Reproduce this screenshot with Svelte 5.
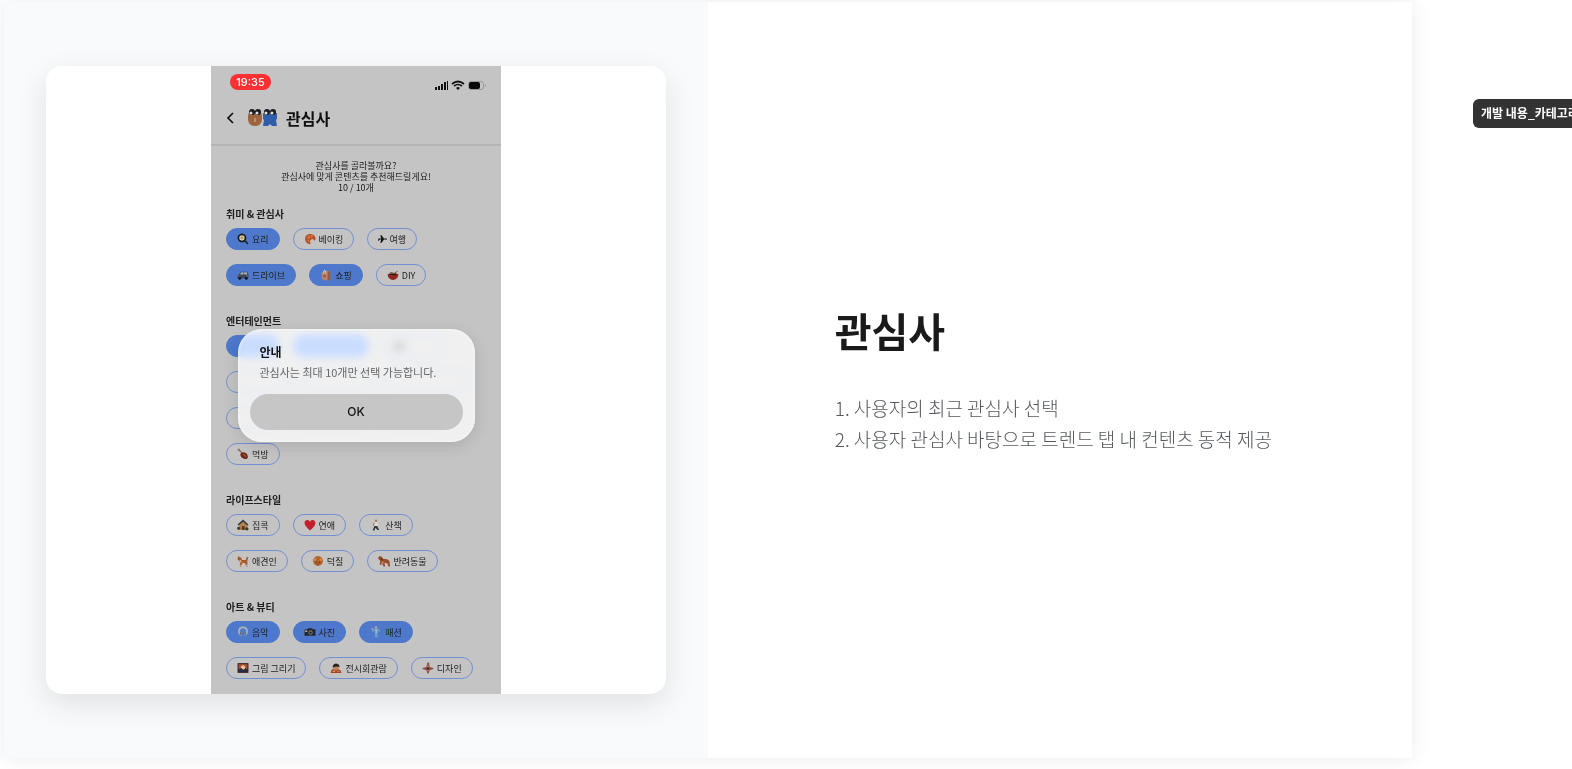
<script>
    // each icon is a list of [path, fill] on a 22x22 grid
    const icons = {
        cook: [
            ['M9 1a8 8 0 1 0 .1 0z', '#161718'],
            ['M9 4a5 5 0 1 0 .1 0z', '#d5d2c8'],
            ['M9 6a3 3 0 1 0 .1 0z', '#c2a052'],
            ['M13 15l2-2 6 6-2 2z', '#222426']
        ],
        bread: [
            ['M2 11C2 3 10 0 17 3c5 3 5 8 3 11l-4-3-3 1-2 3 1 5c-5 1-10-3-10-9z', '#b8502a'],
            ['M5 9l5-5 1 6zM12 3l5 2-3 4zM5 12l4 1 1 5z', '#dc8046']
        ],
        plane: [['M0 10h7L5 3h3l5 7h6q3 1 0 2h-6l-5 7H5l2-7H4l-2 3H0l1-4z', '#141414']],
        car: [
            ['M3 11l4-6h12l2 6v6H1v-5z', '#39475a'],
            ['M8 6h4v4H5zM13 6h5l1 4h-6z', '#a3adb6'],
            ['M5 14a3 3 0 1 0 .1 0zM17 14a3 3 0 1 0 .1 0z', '#17191d'],
            ['M2 12h3v2H2zM17 12h3v2h-3z', '#b35148']
        ],
        bag: [
            ['M3 6l13-3 3 3v14l-5 1-11-2z', '#b48768'],
            ['M16 3l3 3v14l-5 1V6z', '#8f5c48'],
            ['M6 9V4q3-4 5 0v5h-1V5q-2-2-3 0v4z', '#e0d3c8'],
            ['M6 11h5v4H6z', '#b54c40']
        ],
        bowl: [
            ['M1 10q10-5 20 0-1 9-10 10Q2 19 1 10z', '#91291f'],
            ['M3 10q8-4 16 0-8 3-16 0z', '#2c1914'],
            ['M12 8l7-5 1 1-6 5zM5 7q3-3 7 0v2H5z', '#806047']
        ],
        meat: [
            ['M9 8q9-1 11 7 0 6-6 5-8-2-8-9z', '#6c2b1e'],
            ['M10 10q7 1 8 7-6-1-8-7z', '#a54a2b'],
            ['M8 9L3 5 1 5l1-4 3 1 1 2 4 4z', '#8f6f5c']
        ],
        house: [
            ['M11 2l10 9-2 2v7H4v-8L2 11z', '#b38450'],
            ['M1 10L11 1l10 9-2 2-8-7-8 7z', '#373b3f'],
            ['M9 13h5v7H9z', '#5a3526'],
            ['M3 14a3 3 0 1 0 .1 0zM18 15a3 3 0 1 0 .1 0z', '#314227']
        ],
        heart: [['M11 21C5 16 1 12 1 7c0-6 8-7 10-2 2-5 10-4 10 2 0 5-4 9-10 14z', '#c3222c']],
        walk: [
            ['M11 1a2 2 0 1 0 .1 0z', '#a96d4e'],
            ['M9 6h4l2 6-2 1-1 1H8z', '#e0dcd4'],
            ['M8 13h5l4 7h-3l-4-4-2 5H5z', '#2b3440'],
            ['M7 7l-2 6h1l3-5z', '#a96d4e']
        ],
        dog: [
            ['M2 2l3 2 3 1 1 4h7l2-6 3 1-2 6v5l1 6h-3l-2-6-5-1-2 7H5l1-7-2-4-3-1z', '#a9582b'],
            ['M5 9l3 1v4l-2-1zM7 18h3v2H6zM17 18h3v2h-3z', '#e0c09a'],
            ['M3 5h1v1H3z', '#1c1714']
        ],
        face: [
            ['M11 2a9 9 0 1 0 .1 0z', '#b66330'],
            ['M5 5l3 4-4 2zM17 5l-3 4 4 2z', '#df9a5c'],
            ['M7 12h2v2H7zM13 12h2v2h-2zM9 16h4v1H9z', '#53270f']
        ],
        puppy: [
            ['M2 2l5 1 2 4 8 1 4 3 1 10h-3l-2-6-5-1 1 7h-3l-3-7-1 4H3l1-8-4-3z', '#9b4c29'],
            ['M7 5l2 4-1 2-3-3z', '#573020'],
            ['M7 11l3 2v3l-3-2z', '#cf9c77']
        ],
        music: [
            ['M11 1C4 1 1 6 2 13l4 5 3-1-1-7-3 1c0-9 12-9 12 0l-3-1-1 7 3 1 4-5C21 6 18 1 11 1z', '#a8b0b5'],
            ['M5 11l3-1 1 6-3 1zM17 11l-3-1-1 6 3 1z', '#60717d']
        ],
        camera: [
            ['M1 7l5-1 2-2h7l1 2h5v12H1z', '#23272b'],
            ['M12 8a4 4 0 1 0 .1 0z', '#6f797e'],
            ['M12 10a2 2 0 1 0 .1 0z', '#17191b'],
            ['M2 8h4v3H2z', '#b0a685']
        ],
        fashion: [
            ['M8 4h7l4 5-2 2-3-3v13H9V8l-4 3-2-2z', '#6d9fc4'],
            ['M3 3l3 3-1 2-3-3zM11 0a2 2 0 1 0 .1 0z', '#b7a595'],
            ['M10 6h3v7h-3z', '#9cbccb']
        ],
        paint: [
            ['M1 2h20v18H1z', '#402428'],
            ['M3 4h16v9H3z', '#ad4e32'],
            ['M11 6a4 4 0 1 0 .1 0z', '#e5c9a4'],
            ['M3 14l5-3 4 4 4-4 3 4v3H3z', '#252e44']
        ],
        museum: [
            ['M1 20l2-6 5-2 7 1 5 3 1 4z', '#a74428'],
            ['M11 6a5 5 0 1 0 .1 0z', '#c08058'],
            ['M5 8q2-7 8-5 4 1 5 6-6-2-13 1z', '#262222'],
            ['M5 16h4v2H5zM13 17h5v1h-5z', '#dfbd75']
        ],
        design: [
            ['M10 1h3l1 8 7 2v2l-7 2-2 6h-2l-2-6-7-2v-2l7-2z', '#924c45'],
            ['M11 4l2 8-2 7-2-7z', '#bd837b'],
            ['M9 10h4v4H9z', '#2b2826']
        ]
    };

    const sections = [
        {
            title: '취미 & 관심사',
            rows: [
                [{ icon: 'cook', label: '요리', on: true }, { icon: 'bread', label: '베이킹' }, { icon: 'plane', label: '여행', tight: true }],
                [{ icon: 'car', label: '드라이브', on: true }, { icon: 'bag', label: '쇼핑', on: true }, { icon: 'bowl', label: 'DIY' }]
            ]
        },
        {
            title: '엔터테인먼트',
            rows: [
                [{ width: 54, on: true }, { width: 76, on: true }, { icon: 'camera', width: 62 }],
                [{ width: 62 }, { width: 70 }, { width: 87 }],
                [{ width: 54 }, { width: 76 }, { width: 62 }],
                [{ icon: 'meat', label: '먹방' }]
            ]
        },
        {
            title: '라이프스타일',
            rows: [
                [{ icon: 'house', label: '집콕' }, { icon: 'heart', label: '연애' }, { icon: 'walk', label: '산책' }],
                [{ icon: 'dog', label: '애견인' }, { icon: 'face', label: '덕질' }, { icon: 'puppy', label: '반려동물' }]
            ]
        },
        {
            title: '아트 & 뷰티',
            rows: [
                [{ icon: 'music', label: '음악', on: true }, { icon: 'camera', label: '사진', on: true }, { icon: 'fashion', label: '패션', on: true }],
                [{ icon: 'paint', label: '그림 그리기' }, { icon: 'museum', label: '전시회관람' }, { icon: 'design', label: '디자인' }]
            ]
        }
    ];

    const points = ['사용자의 최근 관심사 선택', '사용자 관심사 바탕으로 트렌드 탭 내 컨텐츠 동적 제공'];
</script>

<div class="page">
    <main class="slide">
        <div class="preview">
            <div class="card">
                <div class="phone">
                    <div class="status">
                        <span class="time">19:35</span>
                        <svg width="52" height="12" viewBox="0 0 52 12">
                            <path d="M1 8h2v3H1zM4 7h2v4H4zM7 5h2v6H7zM10 3h2v8h-2zM13 2h1v9h-1z" fill="#111" />
                            <path d="M18 5q6-5 12 0M20 7q4-3 8 0" fill="none" stroke="#111" stroke-width="1.7" />
                            <path d="M22 9q2-2 4 0l-2 2z" fill="#111" />
                            <rect x="34.5" y="2.5" width="15" height="8" rx="2.5" fill="none" stroke="#999" />
                            <rect x="35" y="3" width="11" height="7" rx="2" fill="#080808" />
                            <path d="M51 5q2 1 0 3z" fill="#999" />
                        </svg>
                    </div>

                    <header class="bar">
                        <button class="back" aria-label="뒤로">
                            <svg width="8" height="14" viewBox="0 0 8 14">
                                <path d="M7 2L2 7l5 5" fill="none" stroke="#111" stroke-width="1.7" />
                            </svg>
                        </button>
                        <svg width="31" height="20" viewBox="0 0 31 20">
                            <path d="M1 8q0-5 7-5t7 5v4q-1 6-7 6t-7-6z" fill="#9c653f" />
                            <path d="M16 5l6 1 8-1v6l-1 1 1 6h-5l-2-2-2 2h-5l1-6-1-1z" fill="#315eaa" />
                            <g fill="#17191c">
                                <circle cx="5" cy="4" r="3" /><circle cx="11" cy="4" r="3" />
                                <circle cx="20" cy="4" r="3" /><circle cx="26" cy="4" r="3" />
                            </g>
                            <g fill="#ddd">
                                <circle cx="4" cy="5" r="1.5" /><circle cx="10" cy="5" r="1.5" />
                                <circle cx="19" cy="5" r="1.5" /><circle cx="25" cy="5" r="1.5" />
                            </g>
                            <path d="M8 10v4" stroke="#dfb48b" />
                        </svg>
                        <h2>관심사</h2>
                    </header>

                    <p class="intro">
                        관심사를 골라볼까요?<br />
                        관심사에 맞게 콘텐츠를 추천해드릴게요!<br />
                        10 / 10개
                    </p>

                    <div class="sections">
                        {#each sections as section}
                            <section>
                                <h3>{section.title}</h3>
                                <div class="rows">
                                    {#each section.rows as row}
                                        <div class="row">
                                            {#each row as chip}
                                                <button
                                                    class="chip"
                                                    class:on={chip.on}
                                                    class:tight={chip.tight}
                                                    style:width={chip.width ? chip.width + 'px' : null}
                                                >
                                                    {#if chip.icon}
                                                        <svg viewBox="0 0 22 22">
                                                            {#each icons[chip.icon] as [d, fill]}
                                                                <path {d} {fill} />
                                                            {/each}
                                                        </svg>
                                                    {/if}
                                                    {#if chip.label}{chip.label}{/if}
                                                </button>
                                            {/each}
                                        </div>
                                    {/each}
                                </div>
                            </section>
                        {/each}
                    </div>

                    <div class="overlay">
                        <div class="dialog" role="dialog" aria-labelledby="dialog-title">
                            <h4 id="dialog-title">안내</h4>
                            <p>관심사는 최대 10개만 선택 가능합니다.</p>
                            <button>OK</button>
                        </div>
                    </div>
                </div>
            </div>
        </div>

        <div class="text">
            <h1>관심사</h1>
            <ol>
                {#each points as point, i}
                    <li>{i + 1}. {point}</li>
                {/each}
            </ol>
        </div>
    </main>

    <aside>
        <span class="tag">개발 내용_카테고리</span>
    </aside>
</div>

<style>
    :global(body) {
        margin: 0;
        background: #fff;
    }

    h1, h2, h3, h4, p, ol {
        margin: 0;
        padding: 0;
    }

    button {
        font: inherit;
        color: inherit;
        border: 0;
        padding: 0;
        background: none;
        cursor: pointer;
    }

    .page {
        display: flex;
        box-sizing: border-box;
        height: 100vh;
        padding: 2px 0 11px 4px;
        overflow: hidden;
        font-family: "Noto Sans CJK KR", sans-serif;
    }

    .slide {
        flex: 1;
        min-width: 0;
        display: flex;
        background: #fff;
        box-shadow: 0 0 20px rgba(0, 0, 0, 0.08);
    }

    .preview, .text {
        flex: 1 1 50%;
        box-sizing: border-box;
        min-width: 0;
    }

    .preview {
        padding: 64px 3%;
        background: #f8fafc;
    }

    .card {
        display: flex;
        justify-content: center;
        height: 100%;
        overflow: hidden;
        background: #fff;
        border-radius: 16px;
        box-shadow: 0 10px 30px rgba(0, 0, 0, 0.1);
    }

    .phone {
        position: relative;
        width: 290px;
        overflow: hidden;
        background: #c4c4c4;
        color: #202020;
        font-size: 9px;
    }

    .status {
        display: flex;
        justify-content: space-between;
        align-items: flex-end;
        padding: 8px 15px 0 19px;
    }

    .time {
        width: 41px;
        margin-bottom: 1px;
        border-radius: 8px;
        background: #fb3033;
        color: #fff;
        font: 500 11px/16px Inter, sans-serif;
        text-align: center;
    }

    .bar {
        display: flex;
        align-items: center;
        height: 53px;
        padding: 0 15px;
        border-bottom: 2px solid #b5b5b5;
    }

    .back {
        display: flex;
        margin-right: 13px;
    }

    h2 {
        margin-left: 8px;
        font-size: 16px;
        font-weight: 700;
        line-height: 24px;
        color: #111;
    }

    .intro {
        padding: 14px 0;
        line-height: 11px;
        text-align: center;
    }

    .sections {
        display: grid;
        gap: 28px;
        padding: 0 15px;
    }

    h3 {
        margin-bottom: 7px;
        font-size: 10px;
        font-weight: 700;
        line-height: 14px;
    }

    .rows {
        display: grid;
        gap: 14px;
    }

    .row {
        display: flex;
        gap: 13px;
    }

    .chip {
        flex: none;
        display: flex;
        align-items: center;
        gap: 3px;
        box-sizing: border-box;
        height: 22px;
        padding: 0 10px;
        border: 1px solid #7490d4;
        border-radius: 11px;
        white-space: nowrap;
    }

    .chip.on {
        background: #4d78cc;
        border-color: #4d78cc;
    }

    .chip.tight {
        gap: 1px;
    }

    .chip svg {
        width: 12px;
        height: 12px;
    }

    .chip.tight svg {
        width: 10px;
        height: 10px;
    }

    .overlay {
        position: absolute;
        inset: 0;
        display: flex;
        align-items: center;
        justify-content: center;
        padding-top: 10px;
    }

    .dialog {
        box-sizing: border-box;
        width: 237px;
        padding: 13px 12px 12px;
        border-radius: 24px;
        background: rgba(255, 255, 255, 0.74);
        backdrop-filter: blur(4px) saturate(1.8);
        box-shadow: 0 4px 16px rgba(0, 0, 0, 0.12), inset 0 0 3px #fff;
    }

    .dialog h4, .dialog p {
        padding: 0 10px;
        line-height: 20px;
    }

    .dialog h4 {
        font-size: 12px;
        color: #111;
    }

    .dialog p {
        font-size: 11px;
        color: #666;
        white-space: nowrap;
    }

    .dialog button {
        width: 100%;
        height: 36px;
        margin-top: 12px;
        border-radius: 18px;
        background: #c6c6c7;
        color: #111;
        font: 500 12px Inter, sans-serif;
    }

    .text {
        display: flex;
        flex-direction: column;
        justify-content: center;
        padding: 0 8% 2px 9%;
    }

    h1 {
        margin-bottom: 37px;
        font-size: 40px;
        font-weight: 700;
        line-height: 50px;
        color: #1a1a1a;
    }

    ol {
        list-style: none;
        font-size: 19px;
        font-weight: 300;
        line-height: 31px;
        color: #54575c;
    }

    aside {
        flex: none;
        width: 160px;
        padding-top: 97px;
    }

    .tag {
        display: inline-block;
        margin-left: 61px;
        padding: 0 8px 2px;
        border-radius: 6px;
        background: #333;
        color: #fff;
        font-size: 12px;
        font-weight: 700;
        line-height: 27px;
        white-space: nowrap;
    }
</style>
